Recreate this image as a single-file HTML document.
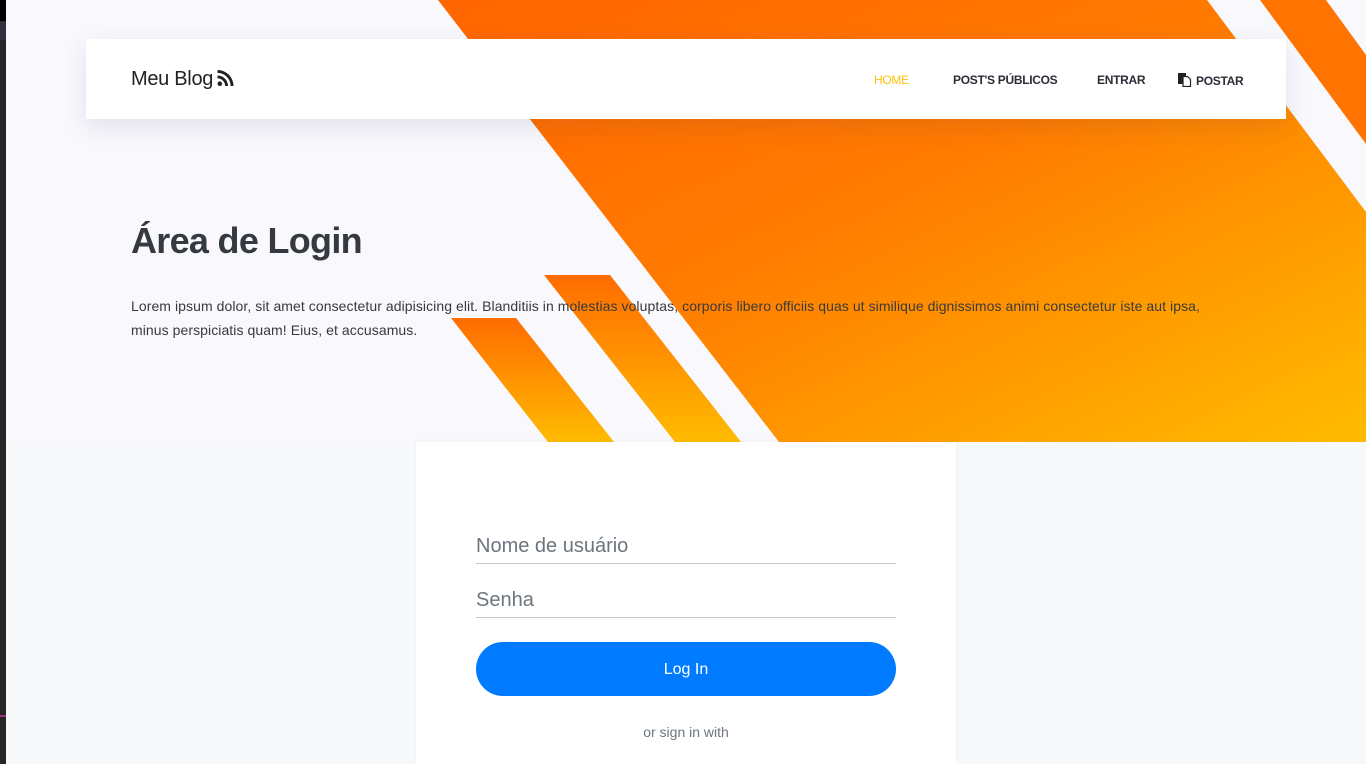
<!DOCTYPE html>
<html><head><meta charset="utf-8">
<style>
*{margin:0;padding:0;box-sizing:border-box}
html,body{width:1366px;height:764px;overflow:hidden}
body{background:#f8f8fd;font-family:"Liberation Sans",Arial,sans-serif;position:relative}
.lower{position:absolute;left:0;top:442px;width:1366px;height:322px;background:#f7f8fa}
.strip{position:absolute;left:0;top:0;width:6px;height:764px;background:#252525}
.strip:before{content:"";position:absolute;left:0;top:0;width:6px;height:21px;background:#000}
.strip:after{content:"";position:absolute;left:0;top:21px;width:6px;height:19px;background:#30303a}
.mag{position:absolute;left:0;top:715px;width:6px;height:2px;background:#a0307a}
svg.bg{position:absolute;left:0;top:0}
.nav{position:absolute;left:86px;top:39px;width:1200px;height:80px;background:#fff;box-shadow:0 8px 22px rgba(60,60,90,.12)}
.brand{position:absolute;left:45px;top:29px;font-size:20px;color:#222;letter-spacing:-0.3px}
.brand svg{vertical-align:-1px;margin-left:4px}
.menu a{position:absolute;top:34px;font-size:12px;font-weight:bold;color:#2b2d36;text-decoration:none;letter-spacing:-0.3px}
h1{position:absolute;left:131px;top:220px;font-size:36px;font-weight:bold;color:#343a40;letter-spacing:-0.7px}
p.lead{position:absolute;left:131px;top:294px;width:1080px;font-size:14px;line-height:24px;color:#3a3a3a;letter-spacing:0.07px}
.card{position:absolute;left:416px;top:442px;width:540px;height:322px;background:#fff;box-shadow:0 0 4px rgba(0,0,0,.05)}
.field{position:absolute;left:60px;width:420px;border-bottom:1px solid #c8c8c8;font-size:20px;color:#6c757d;height:40px;padding-top:11px;line-height:22px}
.btn{position:absolute;left:60px;top:200px;width:420px;height:54px;border-radius:27px;background:#007bff;color:#fff;text-align:center;line-height:56px;font-size:16px}
.or{position:absolute;left:0;width:540px;top:282px;text-align:center;font-size:14px;color:#6c757d}
</style></head><body>
<div class="lower"></div>
<svg class="bg" width="1366" height="442" viewBox="0 0 1366 442">
<defs>
<linearGradient id="g1" x1="0" y1="0" x2="1" y2="1">
<stop offset="0" stop-color="#ff6500"/><stop offset="0.45" stop-color="#ff7a00"/><stop offset="1" stop-color="#ffbb00"/></linearGradient>
<linearGradient id="g2" x1="0" y1="0" x2="0" y2="1">
<stop offset="0" stop-color="#ff6c00"/><stop offset="1" stop-color="#ffbb00"/></linearGradient>
</defs>
<polygon points="438,0 1207,0 1366,212 1366,442 779,442" fill="url(#g1)"/>
<polygon points="1260,0 1326,0 1366,55 1366,144" fill="#ff7400"/>
<polygon points="544,275 610,275 741,442 675,442" fill="url(#g2)"/>
<polygon points="451,318 516,318 614,442 548,442" fill="url(#g2)"/>
</svg>
<div class="strip"></div><div class="mag"></div>
<div class="nav">
<div class="brand">Meu Blog<svg width="17" height="16" viewBox="0 0 16 16"><circle cx="2.3" cy="13.7" r="2.3" fill="#222"/><path d="M0 5.5a10.5 10.5 0 0 1 10.5 10.5H7.6A7.6 7.6 0 0 0 0 8.4z M0 0a16 16 0 0 1 16 16h-2.9A13.1 13.1 0 0 0 0 2.9z" fill="#222"/></svg></div>
<div class="menu">
<a style="left:788px;color:#ffc107;font-weight:normal">HOME</a>
<a style="left:867px">POST'S PÚBLICOS</a>
<a style="left:1011px">ENTRAR</a>
<a style="left:1092px"><svg width="14" height="14" viewBox="0 0 14 14" style="vertical-align:-2px;margin-right:4px"><rect x="0" y="0" width="8" height="11" fill="#222"/><path d="M5 3.5h4.5l3 3V13.5H5z" fill="#fff" stroke="#222" stroke-width="1.2"/></svg>POSTAR</a>
</div>
</div>
<h1>Área de Login</h1>
<p class="lead">Lorem ipsum dolor, sit amet consectetur adipisicing elit. Blanditiis in molestias voluptas, corporis libero officiis quas ut similique dignissimos animi consectetur iste aut ipsa, minus perspiciatis quam! Eius, et accusamus.</p>
<div class="card">
<div class="field" style="top:82px">Nome de usuário</div>
<div class="field" style="top:136px">Senha</div>
<div class="btn">Log In</div>
<div class="or">or sign in with</div>
</div>
</body></html>
